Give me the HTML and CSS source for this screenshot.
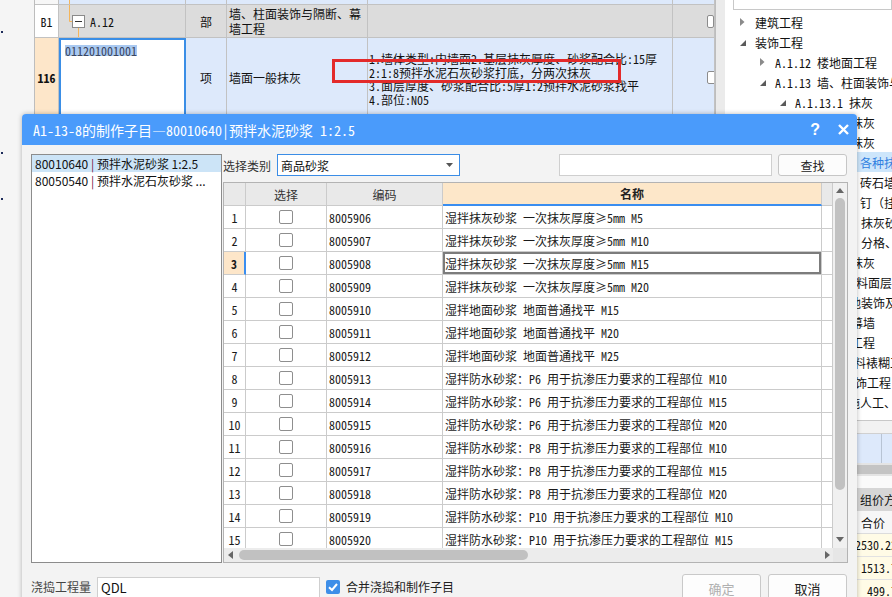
FILE: index.html
```html
<!DOCTYPE html>
<html lang="zh-CN">
<head>
<meta charset="utf-8">
<title>制作子目</title>
<link rel="stylesheet" href="styles.css">
</head>
<body>
<div class="app">
  <div class="leftbar">
    <span class="dot dot-1"></span>
    <span class="dot dot-2"></span>
    <span class="dot dot-3"></span>
  </div>

  <div class="sheet">
    <div class="srow srow-top">
      <div class="c c-num"></div>
      <div class="c"><span class="tline"></span></div>
      <div class="c"></div><div class="c"></div><div class="c"></div><div class="c"></div>
    </div>
    <div class="srow srow-b1">
      <div class="c num-b1">B1</div>
      <div class="c code-b1">
        <svg class="tree-conn" width="20" height="32" viewBox="0 0 20 32">
          <path d="M3.5 0V16.5H6.5" stroke="#f5b55a" fill="none"/>
          <path d="M12.5 22.5V32" stroke="#f5b55a" fill="none"/>
          <rect x="6.5" y="10.5" width="12" height="12" fill="#fff" stroke="#8a8a8a"/>
          <path d="M9 16.5H16" stroke="#333"/>
        </svg>
        <span class="code-b1-text">A.12</span>
      </div>
      <div class="c unit-b1">部</div>
      <div class="c name-b1">墙、柱面装饰与隔断、幕<br>墙工程</div>
      <div class="c"></div>
      <div class="c chk-b1"><span class="sq"></span></div>
    </div>
    <div class="srow srow-116">
      <div class="c num-116">116</div>
      <div class="c code-116"><span class="hl">011201001001</span></div>
      <div class="c unit-116">项</div>
      <div class="c name-116">墙面一般抹灰</div>
      <div class="c desc-116">1.墙体类型:内墙面2.基层抹灰厚度、砂浆配合比:15厚<br>2:1:8预拌水泥石灰砂浆打底，分两次抹灰<br>3.面层厚度、砂浆配合比:5厚1:2预拌水泥砂浆找平<br>4.部位:N05</div>
      <div class="c chk-116"><span class="sq"></span></div>
    </div>
    <div class="redbox"></div>
  </div>

  <div class="splitter"></div>

  <div class="rpanel">
    <div class="rsearch"></div>
    <div class="tree">
      <div class="tn l0"><span class="ic"><svg width="5" height="8" viewBox="0 0 5 8"><path d="M0 0L4.5 4L0 8Z" fill="#8a8a8a"/></svg></span>建筑工程</div>
      <div class="tn l0"><span class="ic ic-open"><svg width="6" height="6" viewBox="0 0 6 6"><path d="M6 0V6H0Z" fill="#5a5a5a"/></svg></span>装饰工程</div>
      <div class="tn l1"><span class="ic"><svg width="5" height="8" viewBox="0 0 5 8"><path d="M0 0L4.5 4L0 8Z" fill="#8a8a8a"/></svg></span>A.1.12 楼地面工程</div>
      <div class="tn l1"><span class="ic ic-open"><svg width="6" height="6" viewBox="0 0 6 6"><path d="M6 0V6H0Z" fill="#5a5a5a"/></svg></span>A.1.13 墙、柱面装饰与隔断、幕墙工程</div>
      <div class="tn l2"><span class="ic ic-open"><svg width="6" height="6" viewBox="0 0 6 6"><path d="M6 0V6H0Z" fill="#5a5a5a"/></svg></span>A.1.13.1 抹灰</div>
      <div class="tn x102">一般抹灰</div>
      <div class="tn x102">装饰抹灰</div>
      <div class="tn x135 hit">各种抹灰面层</div>
      <div class="tn x135">砖石墙面</div>
      <div class="tn x135">钉（挂）网</div>
      <div class="tn x136">抹灰砂浆</div>
      <div class="tn x136">分格、嵌缝</div>
      <div class="tn x102">柱面抹灰</div>
      <div class="tn x119">材料面层</div>
      <div class="tn x112">其他装饰及其他</div>
      <div class="tn x90">隔断、幕墙</div>
      <div class="tn x102">幕墙工程</div>
      <div class="tn x93">油漆涂料裱糊工程</div>
      <div class="tn x94">其他装饰工程</div>
      <div class="tn x111">措施人工、材料</div>
    </div>
    <div class="rb-gap"></div>
    <div class="rb-head"></div>
    <div class="rb-blue"><span class="rb-blue-cell"></span></div>
    <div class="rb-scroll"><span class="rb-thumb"></span></div>
    <div class="rb-white"></div>
    <div class="rb-tab">组价方式</div>
    <div class="rb-hdr">合价</div>
    <div class="rb-num n1">2530.22</div>
    <div class="rb-num n2">1513.71</div>
    <div class="rb-num n3">499.72</div>
  </div>
</div>

<div class="dialog">
  <div class="dlg-title">
    <span class="dlg-title-text">A1-13-8的制作子目—80010640|预拌水泥砂浆 1:2.5</span>
    <span class="dlg-help">?</span>
    <svg class="dlg-close" width="11" height="11" viewBox="0 0 11 11"><path d="M1 1L10 10M10 1L1 10" stroke="#fff" stroke-width="2.4"/></svg>
  </div>
  <div class="dlg-main">
    <div class="list">
      <div class="li sel">80010640 <span class="bar">|</span> 预拌水泥砂浆 1:2.5</div>
      <div class="li">80050540 <span class="bar">|</span> 预拌水泥石灰砂浆 ...</div>
    </div>
    <div class="rightcol">
      <div class="toolbar">
        <span class="lbl">选择类别</span>
        <div class="select"><span>商品砂浆</span><svg width="7" height="4" viewBox="0 0 7 4"><path d="M0 0H7L3.5 4Z" fill="#555"/></svg></div>
        <div class="search"></div>
        <div class="btn-find">查找</div>
      </div>
      <div class="grid">
        <div class="viewport">
          <div class="grow ghead">
            <div class="gc"></div>
            <div class="gc">选择</div>
            <div class="gc">编码</div>
            <div class="gc gh-name">名称</div>
            <div class="gc"></div>
          </div>
          <div class="grow"><div class="gc g-num">1</div><div class="gc g-chk"><span class="cb"></span></div><div class="gc g-code">8005906</div><div class="gc g-name">湿拌抹灰砂浆 一次抹灰厚度≥5mm M5</div><div class="gc"></div></div>
          <div class="grow"><div class="gc g-num">2</div><div class="gc g-chk"><span class="cb"></span></div><div class="gc g-code">8005907</div><div class="gc g-name">湿拌抹灰砂浆 一次抹灰厚度≥5mm M10</div><div class="gc"></div></div>
          <div class="grow cur"><div class="gc g-num">3</div><div class="gc g-chk"><span class="cb"></span></div><div class="gc g-code">8005908</div><div class="gc g-name">湿拌抹灰砂浆 一次抹灰厚度≥5mm M15</div><div class="gc"></div></div>
          <div class="grow"><div class="gc g-num">4</div><div class="gc g-chk"><span class="cb"></span></div><div class="gc g-code">8005909</div><div class="gc g-name">湿拌抹灰砂浆 一次抹灰厚度≥5mm M20</div><div class="gc"></div></div>
          <div class="grow"><div class="gc g-num">5</div><div class="gc g-chk"><span class="cb"></span></div><div class="gc g-code">8005910</div><div class="gc g-name">湿拌地面砂浆 地面普通找平 M15</div><div class="gc"></div></div>
          <div class="grow"><div class="gc g-num">6</div><div class="gc g-chk"><span class="cb"></span></div><div class="gc g-code">8005911</div><div class="gc g-name">湿拌地面砂浆 地面普通找平 M20</div><div class="gc"></div></div>
          <div class="grow"><div class="gc g-num">7</div><div class="gc g-chk"><span class="cb"></span></div><div class="gc g-code">8005912</div><div class="gc g-name">湿拌地面砂浆 地面普通找平 M25</div><div class="gc"></div></div>
          <div class="grow"><div class="gc g-num">8</div><div class="gc g-chk"><span class="cb"></span></div><div class="gc g-code">8005913</div><div class="gc g-name">湿拌防水砂浆：P6 用于抗渗压力要求的工程部位 M10</div><div class="gc"></div></div>
          <div class="grow"><div class="gc g-num">9</div><div class="gc g-chk"><span class="cb"></span></div><div class="gc g-code">8005914</div><div class="gc g-name">湿拌防水砂浆：P6 用于抗渗压力要求的工程部位 M15</div><div class="gc"></div></div>
          <div class="grow"><div class="gc g-num">10</div><div class="gc g-chk"><span class="cb"></span></div><div class="gc g-code">8005915</div><div class="gc g-name">湿拌防水砂浆：P6 用于抗渗压力要求的工程部位 M20</div><div class="gc"></div></div>
          <div class="grow"><div class="gc g-num">11</div><div class="gc g-chk"><span class="cb"></span></div><div class="gc g-code">8005916</div><div class="gc g-name">湿拌防水砂浆：P8 用于抗渗压力要求的工程部位 M10</div><div class="gc"></div></div>
          <div class="grow"><div class="gc g-num">12</div><div class="gc g-chk"><span class="cb"></span></div><div class="gc g-code">8005917</div><div class="gc g-name">湿拌防水砂浆：P8 用于抗渗压力要求的工程部位 M15</div><div class="gc"></div></div>
          <div class="grow"><div class="gc g-num">13</div><div class="gc g-chk"><span class="cb"></span></div><div class="gc g-code">8005918</div><div class="gc g-name">湿拌防水砂浆：P8 用于抗渗压力要求的工程部位 M20</div><div class="gc"></div></div>
          <div class="grow"><div class="gc g-num">14</div><div class="gc g-chk"><span class="cb"></span></div><div class="gc g-code">8005919</div><div class="gc g-name">湿拌防水砂浆：P10 用于抗渗压力要求的工程部位 M10</div><div class="gc"></div></div>
          <div class="grow"><div class="gc g-num">15</div><div class="gc g-chk"><span class="cb"></span></div><div class="gc g-code">8005920</div><div class="gc g-name">湿拌防水砂浆：P10 用于抗渗压力要求的工程部位 M15</div><div class="gc"></div></div>
        </div>
        <div class="vs">
          <svg class="vs-up" width="8" height="5" viewBox="0 0 8 5"><path d="M0 5H8L4 0Z" fill="#666"/></svg>
          <span class="vs-thumb"></span>
          <svg class="vs-down" width="8" height="5" viewBox="0 0 8 5"><path d="M0 0H8L4 5Z" fill="#666"/></svg>
        </div>
        <div class="hs">
          <svg width="5" height="8" viewBox="0 0 5 8"><path d="M5 0V8L0 4Z" fill="#666"/></svg>
          <span class="hs-thumb"></span>
          <svg class="hs-right" width="5" height="8" viewBox="0 0 5 8"><path d="M0 0V8L5 4Z" fill="#666"/></svg>
        </div>
        <div class="corner"></div>
      </div>
    </div>
  </div>
  <div class="dlg-foot">
    <span class="f-lbl">浇捣工程量</span>
    <div class="f-input">QDL</div>
    <span class="f-check"><svg width="14" height="14" viewBox="0 0 14 14"><path d="M3 7.2L6 10L11 4" stroke="#fff" stroke-width="2" fill="none"/></svg></span>
    <span class="f-cklbl">合并浇捣和制作子目</span>
    <div class="f-btn f-ok">确定</div>
    <div class="f-btn f-cancel">取消</div>
  </div>
</div>
</body>
</html>
```

FILE: styles.css
```css
:root {
  --simsun: "Noto Sans Mono CJK SC", "Noto Sans CJK SC", sans-serif;
  --ui: "Noto Sans CJK SC", "Noto Sans", sans-serif;
}
* { box-sizing: border-box; margin: 0; padding: 0; }
html, body { width: 892px; height: 597px; overflow: hidden; }
body {
  position: relative;
  background: #f5f5f5;
  font-family: var(--ui);
  font-size: 12px;
  color: #222;
}
.app { display: flex; width: 892px; height: 597px; }

/* left strip */
.leftbar {
  flex: none; width: 35px;
  border-right: 1px solid #bdbdbd;
  background: #f5f5f5;
  display: flex; flex-direction: column;
}
.dot { display: block; width: 2px; height: 2px; margin-left: 1px; background: #1d2c5a; }
.dot-1 { margin-top: 31px; }
.dot-2 { margin-top: 119px; }
.dot-3 { margin-top: 44px; }

/* spreadsheet */
.sheet {
  flex: none; width: 680px;
  display: flex; flex-direction: column;
  position: relative;
  font-family: var(--simsun);
  font-size: 12px;
  color: #111;
}
.srow {
  display: grid;
  grid-template-columns: 24px 127px 41px 141px 305px 42px;
  border-bottom: 1px solid #c2c2c2;
}
.c { border-right: 1px solid #c2c2c2; overflow: hidden; white-space: nowrap; }
.srow-top { height: 5px; background: #dde9fb; flex: none; }
.srow-top .c-num { background: #f7f7f7; }
.tline { display: block; width: 1px; height: 100%; margin-left: 10px; background: #f5b55a; }

.srow-b1 { height: 33px; background: #dcdcdc; flex: none; }
.num-b1 { background: #fff; display: flex; align-items: center; justify-content: center; }
.code-b1 { display: flex; align-items: center; padding-left: 7px; }
.tree-conn { display: block; flex: none; }
.code-b1-text { margin-left: 4px; }
.unit-b1 { display: flex; align-items: center; justify-content: center; font-family: var(--ui); }
.name-b1 { display: flex; align-items: center; padding-left: 2px; line-height: 15px; font-family: var(--ui); }
.chk-b1 { display: flex; align-items: center; padding-left: 34px; }

.srow-116 { flex: 1; background: #dde9fb; border-bottom: none; }
.num-116 { background: #fde6c9; font-weight: bold; text-align: center; padding-top: 32px; line-height: 16px; }
.code-116 { background: #fff; border: 2px solid #3a8ee6; padding: 2px 0 0 4px; }
.hl { display: inline-block; background: #a9c9f1; color: #3b4660; line-height: 11px; height: 11px; }
.unit-116 { text-align: center; padding-top: 32px; line-height: 16px; font-family: var(--ui); }
.name-116 { padding: 32px 0 0 2px; line-height: 16px; font-family: var(--ui); }
.desc-116 { padding: 14px 0 0 1px; line-height: 13.6px; }
.chk-116 { padding: 33px 0 0 34px; }
.sq { display: block; width: 13px; height: 13px; border: 1px solid #8c8c8c; border-radius: 2px; background: #fff; }

.redbox {
  position: absolute; left: 297px; top: 59px;
  width: 289px; height: 24px;
  border: 3px solid #e32a2a;
}

.splitter { flex: none; width: 10px; background: #ebebeb; border-left: 1px solid #bdbdbd; }

/* right panel */
.rpanel {
  flex: none; width: 167px;
  background: #fff;
  display: flex; flex-direction: column;
  font-family: var(--simsun);
  font-size: 12px;
  color: #111;
  overflow: hidden;
}
.rsearch { flex: none; height: 22px; margin: -12px 0 2px 8px; border: 1px solid #c8c8c8; background: #fff; }
.tree { flex: none; }
.tn { height: 20px; display: flex; align-items: center; white-space: nowrap; overflow: hidden; }
.tn .ic { flex: none; width: 15px; display: flex; align-items: center; }
.tn .ic-open { padding-top: 2px; }
.l0 { padding-left: 15px; }
.l1 { padding-left: 35px; }
.l2 { padding-left: 55px; }
.x90 { padding-left: 90px; }
.x93 { padding-left: 93px; }
.x94 { padding-left: 94px; }
.x102 { padding-left: 102px; }
.x111 { padding-left: 111px; }
.x112 { padding-left: 112px; }
.x119 { padding-left: 119px; }
.x135 { padding-left: 135px; }
.x136 { padding-left: 136px; }
.tn.hit { background: #cde6fb; color: #2f80e0; }

.rb-gap { flex: none; height: 8px; }
.rb-head { flex: none; height: 13px; background: #f2f2f2; border-top: 1px solid #c8c8c8; }
.rb-blue { flex: none; height: 30px; background: #dde9fb; border-top: 1px solid #d0d0d0; display: flex; }
.rb-blue-cell { display: block; width: 157px; height: 100%; border-right: 1px solid #b8c4d4; }
.rb-scroll { flex: none; height: 13px; background: #e4e4e4; display: flex; align-items: center; }
.rb-thumb { display: block; width: 167px; height: 9px; background: #c4c4c4; }
.rb-white { flex: none; height: 12px; background: #fafafa; }
.rb-tab { flex: none; height: 23px; line-height: 23px; background: #d6d6d6; padding-left: 135px; font-family: var(--ui); white-space: nowrap; }
.rb-hdr { flex: none; height: 23px; line-height: 23px; background: #f7f7f7; border-bottom: 1px solid #dcdcdc; padding-left: 136px; font-family: var(--ui); }
.rb-num { flex: none; height: 23px; line-height: 22px; background: #fffbe6; border-bottom: 1px solid #e2e2e2; white-space: nowrap; }
.n1 { padding-left: 130px; }
.n2 { padding-left: 136px; }
.n3 { padding-left: 142px; }

/* dialog */
.dialog {
  position: absolute; left: 22px; top: 114px;
  width: 835px; height: 490px;
  background: #f3f3f3;
  border-radius: 4px 4px 0 0;
  box-shadow: 0 0 5px rgba(0, 0, 0, 0.28);
  display: flex; flex-direction: column;
  z-index: 2;
}
.dlg-title {
  flex: none; height: 31px;
  background: #4a9bfb;
  border-radius: 4px 4px 0 0;
  color: #fff;
  display: flex; align-items: center;
  padding: 0 8px 0 11px;
  font-family: var(--simsun);
  font-size: 14px;
  white-space: nowrap;
}
.dlg-title-text { flex: 1; }
.dlg-help { font-family: "Liberation Sans", sans-serif; font-weight: bold; font-size: 16px; margin-right: 18px; }
.dlg-close { display: block; }

.dlg-main { flex: none; display: flex; padding: 9px 9px 0 9px; height: 418px; }
.list { flex: none; width: 191px; height: 409px; border: 1px solid #8c8c8c; background: #fff; }
.li { height: 17px; line-height: 17px; padding-left: 3px; white-space: nowrap; font-size: 12px; color: #111; }
.li.sel { background: #cce4f7; }
.bar { color: #6d1a4a; }

.rightcol { flex: none; width: 625px; margin-left: 1px; display: flex; flex-direction: column; }
.toolbar { flex: none; display: flex; align-items: center; height: 22px; margin-bottom: 6px; }
.lbl { flex: none; width: 54px; font-size: 12px; color: #333; }
.select {
  flex: none; width: 183px; height: 22px;
  border: 1px solid #3b8de6; background: #fff;
  display: flex; align-items: center; justify-content: space-between;
  padding: 0 6px 0 3px;
  font-size: 12px; color: #111;
}
.search { flex: none; width: 213px; height: 22px; margin-left: 99px; border: 1px solid #cfcfcf; background: #fff; }
.btn-find {
  flex: none; width: 69px; height: 22px; margin-left: 6px;
  border: 1px solid #c6c6c6; border-radius: 3px; background: #fcfcfc;
  display: flex; align-items: center; justify-content: center;
  font-size: 12px; color: #222;
}

.grid {
  flex: none; width: 625px; height: 381px;
  border: 1px solid #b3b3b3;
  background: #fff;
  display: grid;
  grid-template-columns: 609px 14px;
  grid-template-rows: 365px 14px;
}
.viewport { overflow: hidden; }
.grow { display: grid; grid-template-columns: 22px 81px 116px 379px 11px; height: 23px; }
.gc {
  border-right: 1px solid #cbcbcb;
  border-bottom: 1px solid #cbcbcb;
  display: flex; align-items: center;
  white-space: nowrap; overflow: hidden;
  font-family: var(--simsun);
  font-size: 12px; color: #1a1a1a;
}
.ghead .gc { background: #e9e9e9; justify-content: center; font-family: var(--ui); color: #333; }
.ghead .gh-name { background: #fde7c9; font-weight: bold; color: #222; border-bottom: 2px solid #3a8ef0; }
.g-num, .g-chk { justify-content: center; }
.g-code, .g-name { padding-left: 2px; }
.cb { display: block; width: 14px; height: 14px; border: 1px solid #8e8e8e; border-radius: 2px; background: #fff; }
.grow.cur .g-num { background: #fde6c9; font-weight: bold; border-right: 2px solid #3a8ef0; }
.grow.cur .g-name { box-shadow: inset 0 0 0 2px #7c7c7c; }

.vs { background: #f0f0f0; display: flex; flex-direction: column; align-items: center; }
.vs-up { margin-top: 5px; display: block; }
.vs-thumb { display: block; width: 10px; height: 292px; margin-top: 5px; border-radius: 5px; background: #c1c1c1; }
.vs-down { margin-top: auto; margin-bottom: 6px; display: block; }
.hs { background: #ececec; display: flex; align-items: center; padding-left: 4px; }
.hs svg { display: block; }
.hs-thumb { display: block; width: 289px; height: 10px; margin-left: 6px; border-radius: 5px; background: #c1c1c1; }
.hs-right { margin-left: auto; margin-right: 3px; }
.corner { background: #e6e6e6; }

.dlg-foot { flex: none; display: flex; align-items: flex-start; padding: 11px 10px 0 9px; }
.f-lbl { flex: none; width: 66px; margin-top: 3px; line-height: 20px; color: #444; font-size: 12px; }
.f-input {
  flex: none; width: 223px; height: 22px; margin-top: 3px;
  border: 1px solid #cfcfcf; background: #fff;
  padding-left: 3px; line-height: 20px;
  font-size: 13px; color: #111;
}
.f-check { flex: none; display: block; width: 14px; height: 14px; margin: 6px 0 0 6px; background: #3d8ee8; border-radius: 2px; }
.f-check svg { display: block; }
.f-cklbl { flex: none; margin: 3px 0 0 6px; line-height: 20px; font-size: 12px; color: #222; }
.f-btn {
  flex: none; width: 79px; height: 28px;
  border: 1px solid #c9c9c9; border-radius: 3px; background: #fdfdfd;
  display: flex; align-items: center; justify-content: center;
  font-size: 13px; color: #222;
}
.f-ok { margin-left: auto; color: #b0b0b0; }
.f-cancel { margin-left: 7px; }
```
